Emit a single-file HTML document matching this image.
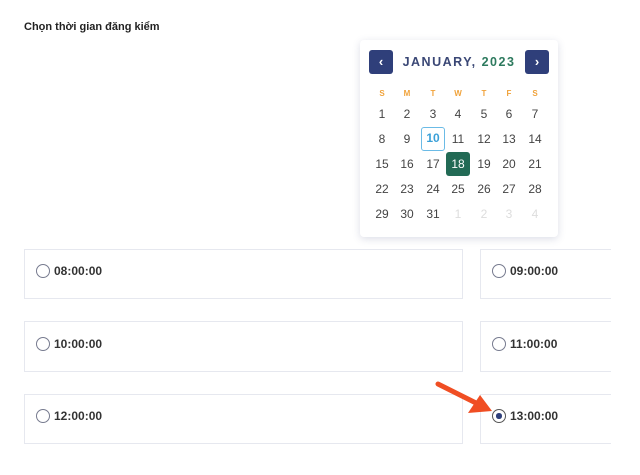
<!DOCTYPE html><html><head><style>
body{margin:0;width:640px;height:475px;background:#fff;font-family:"Liberation Sans",sans-serif;position:relative;overflow:hidden}
.t{position:absolute;left:24px;top:21px;font-size:11px;font-weight:bold;color:#222}
.box{position:absolute;border:1px solid #e6e8ef;background:#fff}
.lab{position:absolute;font-size:12px;font-weight:bold;color:#333;display:flex;align-items:center}
.r{width:14px;height:14px;border:1.3px solid #777b8f;border-radius:50%;margin-right:4px;box-sizing:border-box;display:inline-block;position:relative}
.cal{position:absolute;left:360px;top:40px;width:198px;height:197px;background:#fff;border-radius:4px;box-shadow:0 2px 8px rgba(60,70,120,.18)}
.btn{position:absolute;top:10px;width:24px;height:24px;background:#2f3f7a;border-radius:3px;color:#fff;font-size:13px;font-weight:bold;text-align:center;line-height:23px}
.c{position:absolute;width:24px;text-align:center;font-size:12px;color:#444}
.w{font-size:8px;font-weight:bold;color:#f0a23a}
</style></head><body>
<div class="t">Chọn thời gian đăng kiểm</div>
<div class="box" style="left:24px;top:249px;width:437px;height:48px"></div>
<div class="box" style="left:24px;top:321px;width:437px;height:49px"></div>
<div class="box" style="left:24px;top:394px;width:437px;height:48px"></div>
<div class="box" style="left:480px;top:249px;width:140px;height:48px"></div>
<div class="box" style="left:480px;top:321px;width:140px;height:49px"></div>
<div class="box" style="left:480px;top:394px;width:140px;height:48px"></div>
<div style="position:absolute;left:611px;top:0;width:29px;height:475px;background:#fff"></div>
<div class="lab" style="left:36px;top:264px"><span class="r"></span>08:00:00</div>
<div class="lab" style="left:36px;top:337px"><span class="r"></span>10:00:00</div>
<div class="lab" style="left:36px;top:409px"><span class="r"></span>12:00:00</div>
<div class="lab" style="left:492px;top:264px"><span class="r"></span>09:00:00</div>
<div class="lab" style="left:492px;top:337px"><span class="r"></span>11:00:00</div>
<div class="lab" style="left:492px;top:409px"><span class="r" style="border-color:#555"><span style="position:absolute;left:3px;top:3px;width:5.5px;height:5.5px;border-radius:50%;background:#2f3f7a"></span></span>13:00:00</div>
<svg style="position:absolute;left:430px;top:375px" width="70" height="45"><line x1="8" y1="9" x2="50" y2="30" stroke="#f04e23" stroke-width="5" stroke-linecap="round"/><polygon points="62,36 38,38 50,20" fill="#f04e23"/></svg>
<div class="cal">
<div class="btn" style="left:9px">&#8249;</div>
<div class="btn" style="left:165px">&#8250;</div>
<div style="position:absolute;left:0;width:198px;top:15px;text-align:center;font-size:12.5px;font-weight:bold;letter-spacing:1.5px;color:#3a4775">JANUARY, <span style="color:#2d7a5e">2023</span></div>
<div id="g"></div>
</div>
<script>
var g=document.getElementById('g'),h='',xs=[10,35,61,86,112,137,163];
'SMTWTFS'.split('').forEach(function(d,i){h+='<div class="c w" style="left:'+xs[i]+'px;top:49px">'+d+'</div>'});
var n=1;for(var r=0;r<5;r++)for(var c=0;c<7;c++){var v=n<=31?n:n-31,st='left:'+xs[c]+'px;top:'+(67+r*25)+'px;';
if(n>31)st+='color:#ddd;';
if(n==10)st+='color:#3aa0d8;font-weight:bold;border:1.5px solid #6bbbe6;border-radius:3px;box-sizing:border-box;height:24px;line-height:21px;margin-top:-5px;';
if(n==18)st+='color:#fff;background:#226a55;border-radius:3px;height:24px;line-height:24px;margin-top:-5px;';
h+='<div class="c" style="'+st+'">'+v+'</div>';n++}
g.innerHTML=h;
</script>
</body></html>
